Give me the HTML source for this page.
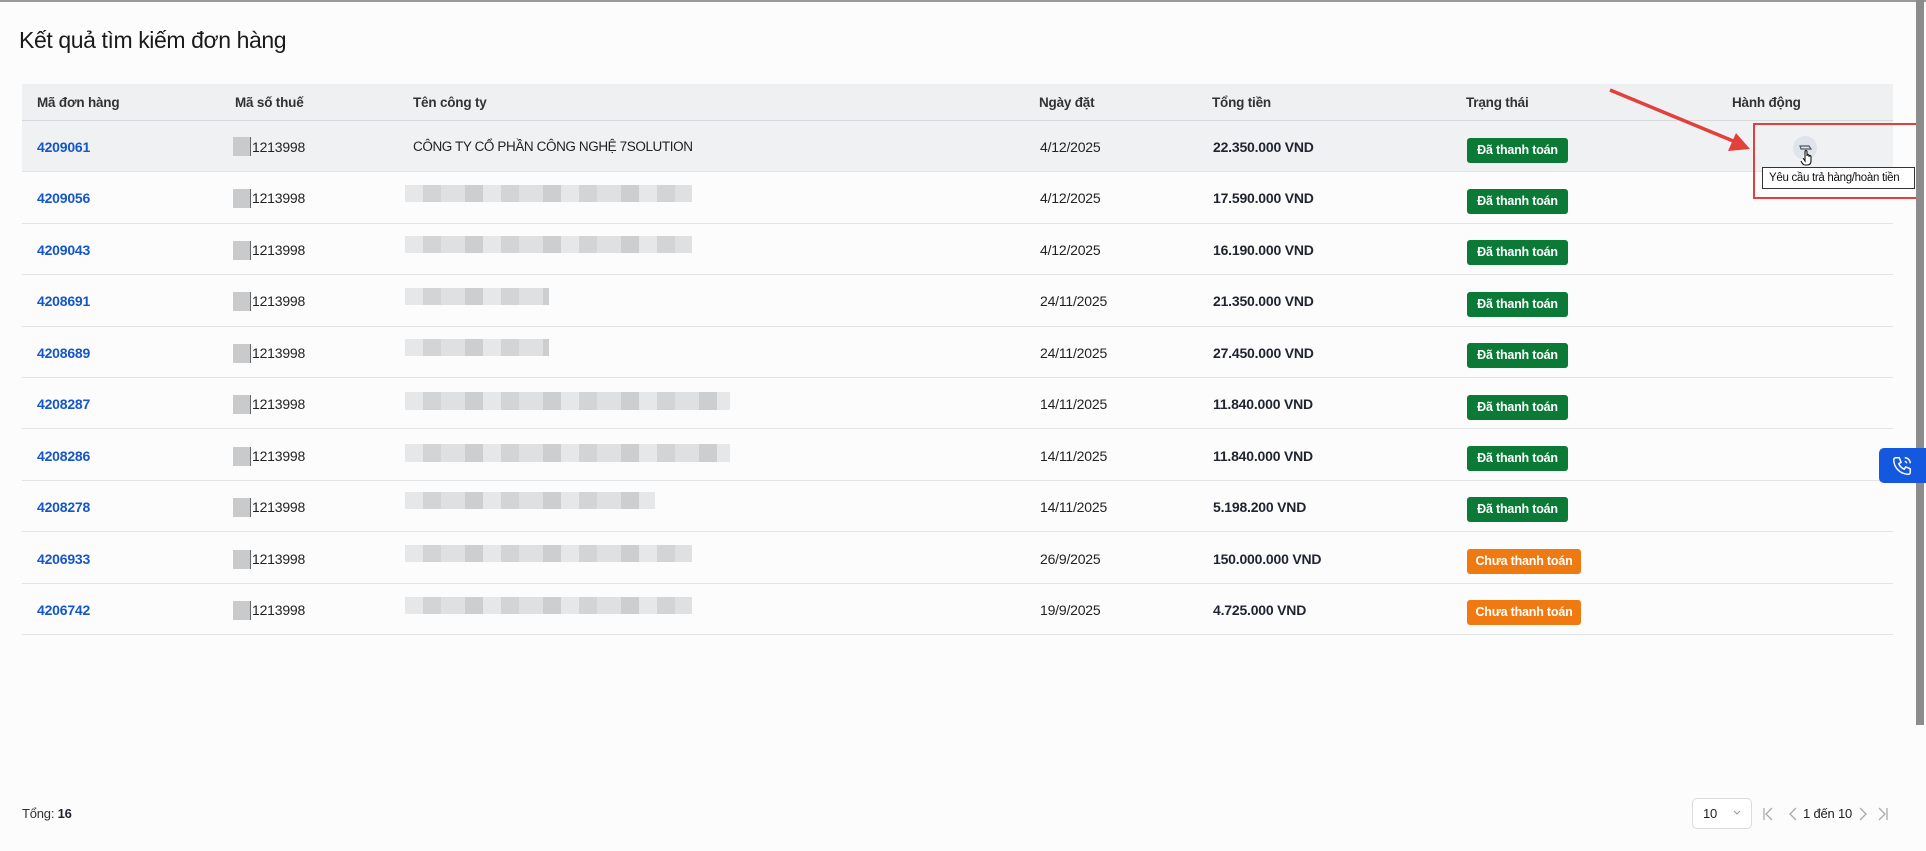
<!DOCTYPE html>
<html><head><meta charset="utf-8"><style>
*{margin:0;padding:0;box-sizing:border-box}
body{width:1926px;height:851px;background:#fcfcfc;font-family:"Liberation Sans",sans-serif;color:#222;position:relative;overflow:hidden;font-size:14px;letter-spacing:-0.2px}
.a{position:absolute;white-space:nowrap}
.topline{position:absolute;left:0;top:0;width:1926px;height:2px;background:#9a9a9a}
.hdr{position:absolute;left:22px;top:84px;width:1871px;height:37px;background:#eef0f2;border-bottom:1px solid #d6d8db}
.row{position:absolute;left:22px;width:1871px;height:51.4px;border-bottom:1px solid #e2e4e6}
.id{color:#1556c8;font-weight:bold}
.b{font-weight:bold;color:#1f2430}
.h{color:#2a2a2a;font-weight:bold;font-size:13.5px;color:#333}
.badge{position:absolute;height:25px;line-height:25px;color:#fff;font-weight:bold;font-size:12.5px;border-radius:3px;text-align:center}
.g{background:#0b7a36;width:101px}
.o{background:#ef7a12;width:114px}
.tax{position:absolute;width:18px;height:19px;background:#c9cacc;border-right:1px solid #666}
.blur{position:absolute;height:17px;background:repeating-linear-gradient(90deg,#e6e7e8 0 18px,#d3d4d6 18px 36px,#dfe0e1 36px 60px,#cdced0 60px 78px)}
</style></head><body>
<div class="topline"></div>
<div class="a" style="left:19px;top:27px;font-size:23px;color:#1a1a1a;letter-spacing:-0.4px">Kết quả tìm kiếm đơn hàng</div>
<div class="hdr"></div>
<div class="a h" style="left:37px;top:95px">Mã đơn hàng</div>
<div class="a h" style="left:235px;top:95px">Mã số thuế</div>
<div class="a h" style="left:413px;top:95px">Tên công ty</div>
<div class="a h" style="left:1039px;top:95px">Ngày đặt</div>
<div class="a h" style="left:1212px;top:95px">Tổng tiền</div>
<div class="a h" style="left:1466px;top:95px">Trạng thái</div>
<div class="a h" style="left:1732px;top:95px">Hành động</div>

<div class="row" style="top:121px;background:#f0f1f3"></div>
<div class="row" style="top:172.4px"></div>
<div class="row" style="top:223.8px"></div>
<div class="row" style="top:275.2px"></div>
<div class="row" style="top:326.6px"></div>
<div class="row" style="top:378px"></div>
<div class="row" style="top:429.4px"></div>
<div class="row" style="top:480.8px"></div>
<div class="row" style="top:532.2px"></div>
<div class="row" style="top:583.6px"></div>

<div class="a id" style="left:37px;top:139px">4209061</div>
<div class="tax" style="left:233px;top:137px"></div><div class="a" style="left:252px;top:139px">1213998</div>
<div class="a" style="left:413px;top:139px;font-size:13.5px;letter-spacing:-0.4px">CÔNG TY CỔ PHẦN CÔNG NGHỆ 7SOLUTION</div>
<div class="a" style="left:1040px;top:139px">4/12/2025</div>
<div class="a b" style="left:1213px;top:139px">22.350.000 VND</div>
<div class="badge g" style="left:1467px;top:138px">Đã thanh toán</div>

<div class="a id" style="left:37px;top:190px">4209056</div>
<div class="tax" style="left:233px;top:189px"></div><div class="a" style="left:252px;top:190px">1213998</div>
<div class="blur" style="left:405px;top:185px;width:287px"></div>
<div class="a" style="left:1040px;top:190px">4/12/2025</div>
<div class="a b" style="left:1213px;top:190px">17.590.000 VND</div>
<div class="badge g" style="left:1467px;top:189px">Đã thanh toán</div>

<div class="a id" style="left:37px;top:242px">4209043</div>
<div class="tax" style="left:233px;top:241px"></div><div class="a" style="left:252px;top:242px">1213998</div>
<div class="blur" style="left:405px;top:236px;width:287px"></div>
<div class="a" style="left:1040px;top:242px">4/12/2025</div>
<div class="a b" style="left:1213px;top:242px">16.190.000 VND</div>
<div class="badge g" style="left:1467px;top:240px">Đã thanh toán</div>

<div class="a id" style="left:37px;top:293px">4208691</div>
<div class="tax" style="left:233px;top:292px"></div><div class="a" style="left:252px;top:293px">1213998</div>
<div class="blur" style="left:405px;top:288px;width:144px"></div>
<div class="a" style="left:1040px;top:293px">24/11/2025</div>
<div class="a b" style="left:1213px;top:293px">21.350.000 VND</div>
<div class="badge g" style="left:1467px;top:292px">Đã thanh toán</div>

<div class="a id" style="left:37px;top:345px">4208689</div>
<div class="tax" style="left:233px;top:344px"></div><div class="a" style="left:252px;top:345px">1213998</div>
<div class="blur" style="left:405px;top:339px;width:144px"></div>
<div class="a" style="left:1040px;top:345px">24/11/2025</div>
<div class="a b" style="left:1213px;top:345px">27.450.000 VND</div>
<div class="badge g" style="left:1467px;top:343px">Đã thanh toán</div>

<div class="a id" style="left:37px;top:396px">4208287</div>
<div class="tax" style="left:233px;top:395px"></div><div class="a" style="left:252px;top:396px">1213998</div>
<div class="blur" style="left:405px;top:392px;width:325px;height:18px"></div>
<div class="a" style="left:1040px;top:396px">14/11/2025</div>
<div class="a b" style="left:1213px;top:396px">11.840.000 VND</div>
<div class="badge g" style="left:1467px;top:395px">Đã thanh toán</div>

<div class="a id" style="left:37px;top:448px">4208286</div>
<div class="tax" style="left:233px;top:447px"></div><div class="a" style="left:252px;top:448px">1213998</div>
<div class="blur" style="left:405px;top:444px;width:325px;height:18px"></div>
<div class="a" style="left:1040px;top:448px">14/11/2025</div>
<div class="a b" style="left:1213px;top:448px">11.840.000 VND</div>
<div class="badge g" style="left:1467px;top:446px">Đã thanh toán</div>

<div class="a id" style="left:37px;top:499px">4208278</div>
<div class="tax" style="left:233px;top:498px"></div><div class="a" style="left:252px;top:499px">1213998</div>
<div class="blur" style="left:405px;top:492px;width:250px"></div>
<div class="a" style="left:1040px;top:499px">14/11/2025</div>
<div class="a b" style="left:1213px;top:499px">5.198.200 VND</div>
<div class="badge g" style="left:1467px;top:497px">Đã thanh toán</div>

<div class="a id" style="left:37px;top:551px">4206933</div>
<div class="tax" style="left:233px;top:550px"></div><div class="a" style="left:252px;top:551px">1213998</div>
<div class="blur" style="left:405px;top:545px;width:287px"></div>
<div class="a" style="left:1040px;top:551px">26/9/2025</div>
<div class="a b" style="left:1213px;top:551px">150.000.000 VND</div>
<div class="badge o" style="left:1467px;top:549px">Chưa thanh toán</div>

<div class="a id" style="left:37px;top:602px">4206742</div>
<div class="tax" style="left:233px;top:601px"></div><div class="a" style="left:252px;top:602px">1213998</div>
<div class="blur" style="left:405px;top:597px;width:287px"></div>
<div class="a" style="left:1040px;top:602px">19/9/2025</div>
<div class="a b" style="left:1213px;top:602px">4.725.000 VND</div>
<div class="badge o" style="left:1467px;top:600px">Chưa thanh toán</div>

<div class="a" style="left:1793px;top:136px;width:24px;height:24px;border-radius:50%;background:#dfe3ea"></div>
<svg class="a" style="left:1797px;top:140px" width="18" height="26" viewBox="0 0 18 26"><path d="M3 6h9l2 3H4z" fill="none" stroke="#556" stroke-width="1.2"/><path d="M8 12v9l-2-3M8 12c0-2 2-2 2 0v4c0-2 2-2 2 0v1c0-2 2-2 2 0v4c0 3-2 4-4 4H8c-2 0-3-2-4-4" fill="#fff" stroke="#111" stroke-width="1.1"/></svg>
<div class="a" style="left:1762px;top:167px;width:153px;height:22px;background:#fff;border:1px solid #333;font-size:11.5px;line-height:20px;padding-left:6px;color:#111;letter-spacing:-0.3px;overflow:hidden">Yêu cầu trả hàng/hoàn tiền</div>
<div class="a" style="left:1753px;top:123px;width:170px;height:76px;border:2px solid #e2403a"></div>
<svg class="a" style="left:1600px;top:85px" width="160" height="75"><line x1="10" y1="5" x2="138" y2="58" stroke="#e2403a" stroke-width="3.5"/><polygon points="150,64 128,66 136,48" fill="#e2403a"/></svg>

<div class="a" style="left:1916px;top:0;width:8px;height:725px;background:#8c8c8c"></div>
<div class="a" style="left:1879px;top:448px;width:47px;height:35px;background:#1558e0;border-radius:5px 0 0 5px"></div>
<svg class="a" style="left:1891px;top:455px" width="22" height="22" viewBox="0 0 24 24" fill="none" stroke="#fff" stroke-width="1.6"><path d="M5 3h4l2 5-2.5 1.5a11 11 0 0 0 6 6L16 13l5 2v4a2 2 0 0 1-2 2A16 16 0 0 1 3 5a2 2 0 0 1 2-2z"/><path d="M15 3a6 6 0 0 1 6 6M15 7a2 2 0 0 1 2 2"/></svg>

<div class="a" style="left:22px;top:806px;font-size:13px;color:#333">Tổng: <b style="color:#1f2430">16</b></div>
<div class="a" style="left:1692px;top:798px;width:60px;height:31px;border:1px solid #dcdcdc;border-radius:5px;background:#fff"></div>
<div class="a" style="left:1703px;top:806px;font-size:13px">10</div>
<svg class="a" style="left:1733px;top:810px" width="8" height="6"><path d="M1 1l3 3 3-3" stroke="#999" fill="none"/></svg>
<svg class="a" style="left:1762px;top:806px" width="12" height="16"><path d="M2 2v12M10 2L4 8l6 6" stroke="#aaa" fill="none" stroke-width="1.3"/></svg>
<svg class="a" style="left:1788px;top:806px" width="10" height="16"><path d="M8 2L2 8l6 6" stroke="#aaa" fill="none" stroke-width="1.3"/></svg>
<div class="a" style="left:1803px;top:806px;font-size:13px;color:#222">1 đến 10</div>
<svg class="a" style="left:1858px;top:806px" width="10" height="16"><path d="M2 2l6 6-6 6" stroke="#aaa" fill="none" stroke-width="1.3"/></svg>
<svg class="a" style="left:1877px;top:806px" width="12" height="16"><path d="M2 2l6 6-6 6M10 2v12" stroke="#aaa" fill="none" stroke-width="1.3"/></svg>
</body></html>
